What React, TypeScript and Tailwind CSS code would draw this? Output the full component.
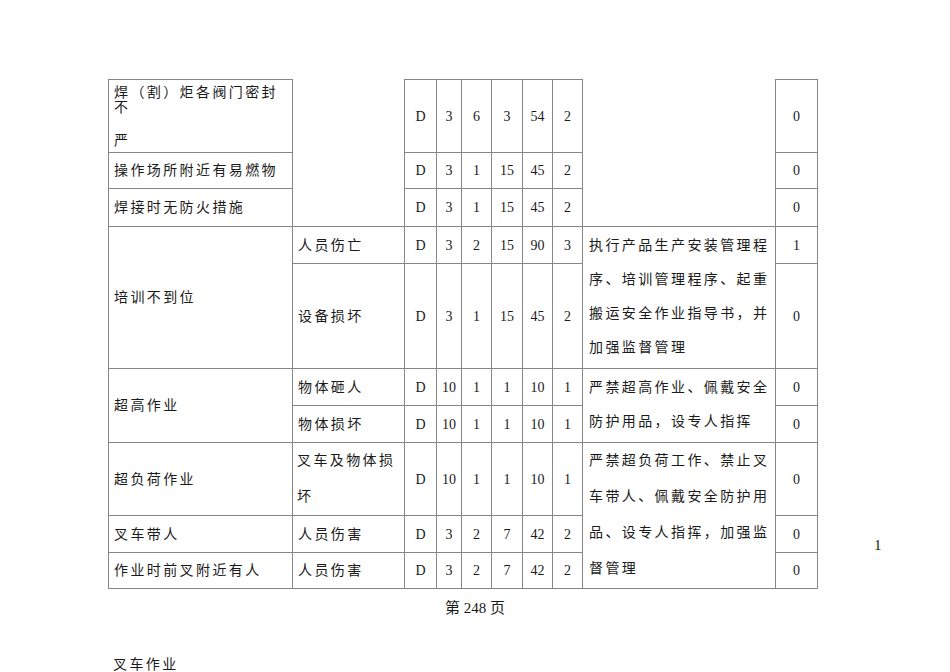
import React from "react";

const txt = "border border-[#868686] pl-[5px] pr-0 py-0 align-middle text-left tracking-[2.4px]";
const num = "border border-[#868686] p-0 align-middle text-center";

function Nums({ v }: { v: (string | number)[] }) {
    return (
        <>
            {v.map((x, i) => (
                <td key={i} className={num}>
                    {x}
                </td>
            ))}
        </>
    );
}

export default function App() {
    return (
        <div className="w-[950px] h-[672px] overflow-hidden bg-white text-[#1a1a1a] text-[14px] font-['Liberation_Serif','Noto_Sans_CJK_SC',serif]">
            <div className="flex items-start pt-[79px] pl-[108px]">
                <table className="table-fixed border-collapse w-[709px]">
                    <colgroup>
                        <col className="w-[184px]" />
                        <col className="w-[112px]" />
                        <col className="w-[32px]" />
                        <col className="w-[25px]" />
                        <col className="w-[30px]" />
                        <col className="w-[31px]" />
                        <col className="w-[30px]" />
                        <col className="w-[30px]" />
                        <col className="w-[193px]" />
                        <col className="w-[42px]" />
                    </colgroup>
                    <tbody>
                        <tr className="h-[73px]">
                            <td className="border border-[#868686] pl-[5px] py-0 align-top tracking-[2.4px]">
                                <div className="pt-[5px] leading-[15px]">焊（割）炬各阀门密封</div>
                                <div className="leading-[15px]">不</div>
                                <div className="mt-[18px] leading-[15px]">严</div>
                            </td>
                            <td rowSpan={3} className="border border-t-0 border-[#868686] p-0"></td>
                            <Nums v={["D", 3, 6, 3, 54, 2]} />
                            <td rowSpan={3} className="border border-t-0 border-[#868686] p-0"></td>
                            <td className={num}>0</td>
                        </tr>
                        <tr className="h-[36px]">
                            <td className={txt}>操作场所附近有易燃物</td>
                            <Nums v={["D", 3, 1, 15, 45, 2]} />
                            <td className={num}>0</td>
                        </tr>
                        <tr className="h-[38px]">
                            <td className={txt}>焊接时无防火措施</td>
                            <Nums v={["D", 3, 1, 15, 45, 2]} />
                            <td className={num}>0</td>
                        </tr>
                        <tr className="h-[37px]">
                            <td rowSpan={2} className={txt}>
                                培训不到位
                            </td>
                            <td className={txt}>人员伤亡</td>
                            <Nums v={["D", 3, 2, 15, 90, 3]} />
                            <td rowSpan={2} className="border border-[#868686] pl-[6px] pr-0 pt-[2px] pb-0 align-top tracking-[2.4px] leading-[34px]">
                                执行产品生产安装管理程
                                <br />
                                序、培训管理程序、起重
                                <br />
                                搬运安全作业指导书，并
                                <br />
                                加强监督管理
                            </td>
                            <td className={num}>1</td>
                        </tr>
                        <tr className="h-[105px]">
                            <td className={txt}>设备损坏</td>
                            <Nums v={["D", 3, 1, 15, 45, 2]} />
                            <td className={num}>0</td>
                        </tr>
                        <tr className="h-[37px]">
                            <td rowSpan={2} className={txt}>
                                超高作业
                            </td>
                            <td className={txt}>物体砸人</td>
                            <Nums v={["D", 10, 1, 1, 10, 1]} />
                            <td rowSpan={2} className="border border-[#868686] pl-[6px] pr-0 pt-[2px] pb-0 align-top tracking-[2.4px] leading-[34px]">
                                严禁超高作业、佩戴安全
                                <br />
                                防护用品，设专人指挥
                            </td>
                            <td className={num}>0</td>
                        </tr>
                        <tr className="h-[37px]">
                            <td className={txt}>物体损坏</td>
                            <Nums v={["D", 10, 1, 1, 10, 1]} />
                            <td className={num}>0</td>
                        </tr>
                        <tr className="h-[73px]">
                            <td className={txt}>超负荷作业</td>
                            <td className="border border-[#868686] pl-[4px] p-0 align-middle tracking-[2.4px] leading-[36px]">
                                叉车及物体损
                                <br />
                                坏
                            </td>
                            <Nums v={["D", 10, 1, 1, 10, 1]} />
                            <td rowSpan={3} className="border border-[#868686] pl-[6px] pr-0 pt-0 pb-0 align-top tracking-[2.4px] leading-[36px]">
                                严禁超负荷工作、禁止叉
                                <br />
                                车带人、佩戴安全防护用
                                <br />
                                品、设专人指挥，加强监
                                <br />
                                督管理
                            </td>
                            <td className={num}>0</td>
                        </tr>
                        <tr className="h-[37px]">
                            <td className={txt}>叉车带人</td>
                            <td className={txt}>人员伤害</td>
                            <Nums v={["D", 3, 2, 7, 42, 2]} />
                            <td className={num}>0</td>
                        </tr>
                        <tr className="h-[36px]">
                            <td className={txt}>作业时前叉附近有人</td>
                            <td className={txt}>人员伤害</td>
                            <Nums v={["D", 3, 2, 7, 42, 2]} />
                            <td className={num}>0</td>
                        </tr>
                    </tbody>
                </table>
                <div className="ml-[56px] mt-[456px] text-[15px] leading-[20px]">1</div>
            </div>
            <div className="mt-[9px] text-center text-[15px] leading-[20px]">第&nbsp;248&nbsp;页</div>
            <div className="mt-[37px] pl-[113px] tracking-[2.4px] leading-[20px]">叉车作业</div>
        </div>
    );
}
